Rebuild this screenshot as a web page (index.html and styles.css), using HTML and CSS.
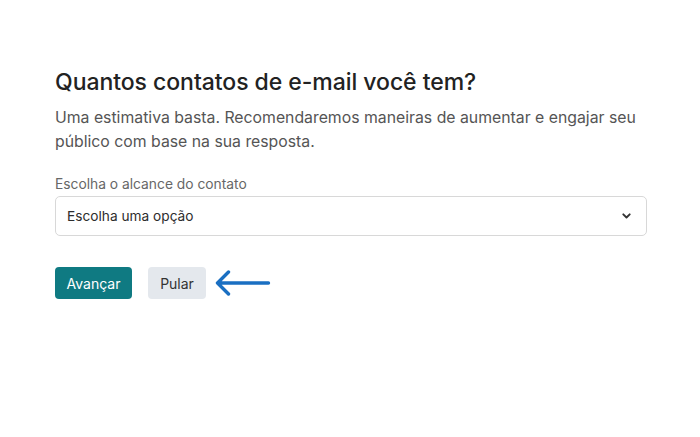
FILE: index.html
```html
<!DOCTYPE html>
<html lang="pt-BR">
<head>
<meta charset="utf-8">
<link rel="stylesheet" href="styles.css">
</head>
<body>
<main class="page">
  <h1 class="title">Quantos contatos de e-mail você tem?</h1>
  <p class="lead">Uma estimativa basta. Recomendaremos maneiras de aumentar e engajar seu público com base na sua resposta.</p>
  <div class="field">
    <label class="label">Escolha o alcance do contato</label>
    <div class="select">
      <span>Escolha uma opção</span>
      <svg class="chev" width="9" height="6" viewBox="0 0 9 6"><path d="M1.3 1.3 L4.5 4.5 L7.7 1.3" fill="none" stroke="#333" stroke-width="1.9" stroke-linecap="round" stroke-linejoin="round"/></svg>
    </div>
  </div>
  <div class="actions">
    <button class="btn primary">Avançar</button>
    <button class="btn secondary">Pular</button>
    <svg class="arrow" width="56" height="28" viewBox="0 0 56 28"><path d="M2.5 14 H53.5 M13.5 3 L2.5 14 L13.5 25" fill="none" stroke="#1a6fc2" stroke-width="3.4" stroke-linecap="round" stroke-linejoin="round"/></svg>
  </div>
</main>
</body>
</html>
```

FILE: styles.css
```css
html, body {
  margin: 0;
  padding: 0;
  background: #ffffff;
}
body {
  font-family: "Inter", "Liberation Sans", sans-serif;
  color: #241c15;
}
.page {
  padding: 66px 53px 0 55px;
}
.title {
  margin: 0;
  font-family: "Inter", sans-serif;
  font-size: 23px;
  font-weight: 500;
  line-height: 32px;
  color: #222;
  letter-spacing: -0.05px;
}
.lead {
  margin: 8px 0 0;
  font-family: "Inter", sans-serif;
  font-size: 15.8px;
  line-height: 24px;
  color: #555;
  max-width: 595px;
}
.field {
  margin-top: 21px;
}
.label {
  display: block;
  font-family: "Inter", sans-serif;
  font-size: 13.8px;
  line-height: 18px;
  color: #676767;
}
.select {
  margin-top: 3px;
  height: 38px;
  border: 1px solid #d8d8d8;
  border-radius: 5px;
  display: flex;
  align-items: center;
  justify-content: space-between;
  padding: 0 15px 0 11px;
  font-family: "Inter", sans-serif;
  font-size: 13.7px;
  color: #2d2d2d;
}
.actions {
  margin-top: 31px;
  display: flex;
  align-items: center;
  gap: 16px;
}
.btn {
  height: 32px;
  border: none;
  border-radius: 4px;
  font-family: "Inter", sans-serif;
  font-size: 14px;
  padding: 0;
}
.primary {
  background: #0f7a82;
  color: #fff;
  width: 77px;
}
.secondary {
  background: #e4e8ed;
  color: #333;
  width: 58px;
}
.arrow {
  margin-left: -7px;
}
```
